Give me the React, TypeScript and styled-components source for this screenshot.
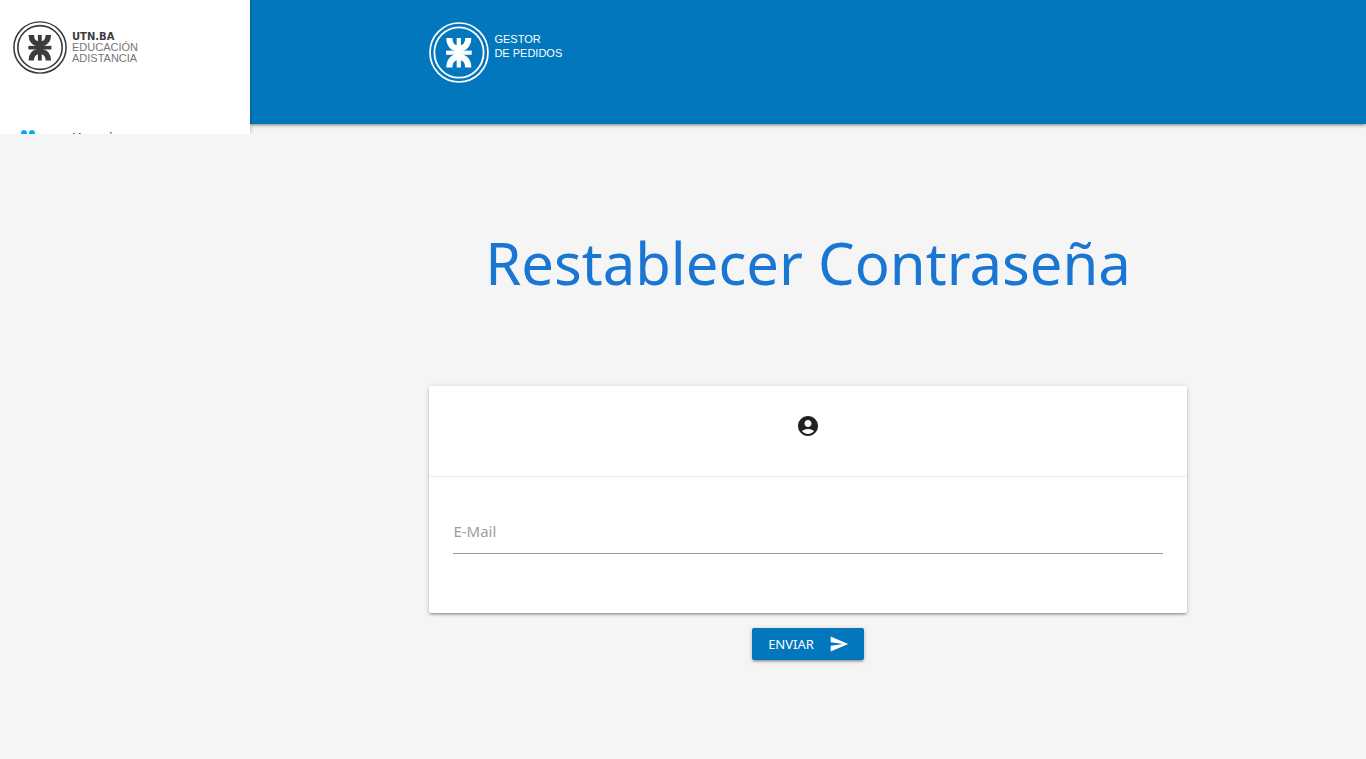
import React from "react";
import styled, { createGlobalStyle } from "styled-components";
import { MdAccountCircle, MdGroup, MdSend } from "react-icons/md";

const GlobalStyle = createGlobalStyle`
  *, *::before, *::after { box-sizing: border-box; }
  body {
    margin: 0;
    background: #f5f5f5;
    color: #212121;
    font-family: "Noto Sans", sans-serif;
    font-size: 14px;
  }
`;

const cardShadow =
  "0 2px 2px 0 rgba(0,0,0,0.14), 0 3px 1px -2px rgba(0,0,0,0.12), 0 1px 5px 0 rgba(0,0,0,0.2)";

const Page = styled.div`
  display: grid;
  grid-template-columns: 250px minmax(0, 1fr);
  align-items: start;
  min-height: 100vh;
`;

const Sidebar = styled.aside`
  z-index: 1;
  height: 134px;
  padding: 21px 13px 0;
  background: #fff;
  box-shadow: ${cardShadow};
  clip-path: inset(0 -10px 0 0);
`;

const Brand = styled.a`
  display: flex;
  align-items: flex-start;
  gap: 5px;
  color: inherit;
  text-decoration: none;
`;

const BrandName = styled.span<{ $tone: string; $leading: number }>`
  display: grid;
  padding-top: 10px;
  color: ${(p) => p.$tone};
  font: 11px/${(p) => p.$leading}px "Liberation Sans", sans-serif;
`;

const Strong = styled.strong`
  color: #3c3c3b;
  font-family: "DejaVu Sans", sans-serif;
  font-size: 10px;
`;

const Menu = styled.nav`
  padding: 47px 3px 0;
`;

const MenuLink = styled.a`
  display: flex;
  align-items: center;
  gap: 32px;
  height: 32px;
  color: #444;
  font-size: 13px;
  font-weight: 500;
  text-decoration: none;
  svg { color: #03a9f4; }
`;

const Header = styled.header`
  height: 124px;
  padding-top: 22px;
  background: #0277bd;
  box-shadow: ${cardShadow};
`;

const Container = styled.div`
  width: 70%;
  margin: 0 auto;
  padding: 0 12px;
`;

const Title = styled.h1`
  margin: 95px 0 79px;
  color: #1976d2;
  font-family: "Noto Sans", sans-serif;
  font-size: 58px;
  font-weight: 400;
  line-height: 88px;
  text-align: center;
  white-space: nowrap;
`;

const Card = styled.section`
  background: #fff;
  border-radius: 2px;
  box-shadow: ${cardShadow};
`;

const CardHead = styled.div`
  display: flex;
  justify-content: center;
  height: 91px;
  padding-top: 28px;
  border-bottom: 1px solid #e9e9e9;
`;

const CardBody = styled.div`
  padding: 32px 24px 59px;
`;

const Field = styled.div`
  position: relative;
`;

const Label = styled.label`
  position: absolute;
  top: 11px;
  left: 0;
  color: #9e9e9e;
  font-size: 15px;
  line-height: 22px;
  cursor: text;
`;

const Input = styled.input`
  display: block;
  width: 100%;
  height: 45px;
  padding: 0;
  border: 0;
  border-bottom: 1px solid #9e9e9e;
  outline: 0;
  background: transparent;
  font: 15px "Noto Sans", sans-serif;
  &:focus + ${Label}, &:not(:placeholder-shown) + ${Label} {
    top: -10px;
    color: #0277bd;
  }
`;

const Actions = styled.div`
  display: flex;
  justify-content: center;
  padding: 15px 0;
`;

const Submit = styled.button`
  display: flex;
  align-items: center;
  gap: 15px;
  height: 32px;
  padding: 0 15px 0 16px;
  border: 0;
  border-radius: 2px;
  background: #0277bd;
  box-shadow: ${cardShadow};
  color: #fff;
  font: 13px "Noto Sans", sans-serif;
  cursor: pointer;
`;

function Emblem({ width, height, color }: { width: number; height: number; color: string }) {
  return (
    <svg width={width} height={height} viewBox="0 0 59 61" preserveAspectRatio="none" fill="none" stroke={color} aria-hidden="true">
      <ellipse cx="29.5" cy="30.5" rx="28.5" ry="29.5" strokeWidth="1.7" />
      <ellipse cx="29.5" cy="30.5" rx="24.2" ry="25.2" strokeWidth="1.8" />
      <path d="M20 16C20 22 23 26.500 29.300 26.500S38.600 22 38.600 16" strokeWidth="6" />
      <path d="M20 45.500C20 39.500 23 35 29.300 35S38.600 39.500 38.600 45.500" strokeWidth="6" />
      <path d="M16.800 30.700H42" strokeWidth="4.2" />
      <path d="M29.300 16V45.500" strokeWidth="4.2" />
    </svg>
  );
}

export default function App() {
  return (
    <>
      <GlobalStyle />
      <Page>
        <Sidebar>
          <Brand href="#">
            <Emblem width={54} height={53} color="#3c3c3b" />
            <BrandName $tone="#777" $leading={11}>
              <Strong>UTN.BA</Strong>
              <span>EDUCACIÓN</span>
              <span>ADISTANCIA</span>
            </BrandName>
          </Brand>
          <Menu>
            <MenuLink href="#usuarios">
              <MdGroup size={24} />
              Usuarios
            </MenuLink>
          </Menu>
        </Sidebar>
        <div>
          <Header>
            <Container>
              <Brand href="#">
                <Emblem width={60} height={61} color="#fff" />
                <BrandName $tone="#fff" $leading={14}>
                  <span>GESTOR</span>
                  <span>DE PEDIDOS</span>
                </BrandName>
              </Brand>
            </Container>
          </Header>
          <Container as="main">
            <Title>Restablecer Contraseña</Title>
            <form onSubmit={(e) => e.preventDefault()}>
              <Card>
                <CardHead>
                  <MdAccountCircle size={24} />
                </CardHead>
                <CardBody>
                  <Field>
                    <Input id="email" type="email" placeholder=" " />
                    <Label htmlFor="email">E-Mail</Label>
                  </Field>
                </CardBody>
              </Card>
              <Actions>
                <Submit type="submit">
                  ENVIAR
                  <MdSend size={20} />
                </Submit>
              </Actions>
            </form>
          </Container>
        </div>
      </Page>
    </>
  );
}
